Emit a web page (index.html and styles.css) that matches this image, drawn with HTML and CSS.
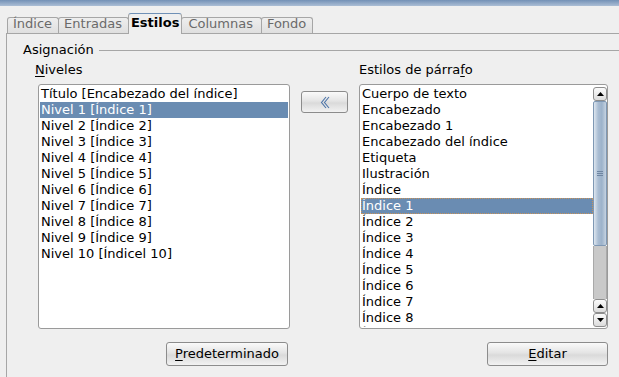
FILE: index.html
```html
<!DOCTYPE html>
<html lang="es">
<head>
  <meta charset="UTF-8" />
  <title>Índice - Estilos</title>
  <link rel="stylesheet" href="styles.css">
</head>
<body>

  <div class="titlebar"></div>

  <!-- Pestañas -->
  <div class="tabs">
    <div class="tab">Índice</div>
    <div class="tab">Entradas</div>
    <div class="tab active">Estilos</div>
    <div class="tab wide">Columnas</div>
    <div class="tab">Fondo</div>
  </div>

  <div class="pane">
    <div class="group-title">
      <span>Asignación</span>
      <div class="group-line"></div>
    </div>

    <div class="group-body">
      <div class="label label-left"><u>N</u>iveles</div>
      <div class="label label-right">Estilos de párra<u>f</u>o</div>

      <!-- Lista de niveles -->
      <div class="listbox levels">
        <div class="item">Título [Encabezado del índice]</div>
        <div class="item selected">Nivel 1 [Índice 1]</div>
        <div class="item">Nivel 2 [Índice 2]</div>
        <div class="item">Nivel 3 [Índice 3]</div>
        <div class="item">Nivel 4 [Índice 4]</div>
        <div class="item">Nivel 5 [Índice 5]</div>
        <div class="item">Nivel 6 [Índice 6]</div>
        <div class="item">Nivel 7 [Índice 7]</div>
        <div class="item">Nivel 8 [Índice 8]</div>
        <div class="item">Nivel 9 [Índice 9]</div>
        <div class="item">Nivel 10 [Índicel 10]</div>
      </div>

      <button class="btn assign-btn">
        <svg width="10" height="13" viewBox="0 0 10 13"><path d="M6 1 L1.5 6.5 L6 12 M9 1 L4.5 6.5 L9 12" stroke="#4c74a8" stroke-width="1.1" fill="none"/></svg>
      </button>

      <!-- Lista de estilos -->
      <div class="listbox styles-list">
        <div class="items">
          <div class="item">Cuerpo de texto</div>
          <div class="item">Encabezado</div>
          <div class="item">Encabezado 1</div>
          <div class="item">Encabezado del índice</div>
          <div class="item">Etiqueta</div>
          <div class="item">Ilustración</div>
          <div class="item">Índice</div>
          <div class="item selected focus">Índice 1</div>
          <div class="item">Índice 2</div>
          <div class="item">Índice 3</div>
          <div class="item">Índice 4</div>
          <div class="item">Índice 5</div>
          <div class="item">Índice 6</div>
          <div class="item">Índice 7</div>
          <div class="item">Índice 8</div>
          <div class="item">Índice 9</div>
        </div>
        <div class="scrollbar">
          <div class="sb-btn"><svg width="7" height="4" viewBox="0 0 7 4"><path d="M0 4 L3.5 0 L7 4 Z" fill="#000"/></svg></div>
          <div class="sb-thumb"><div class="grip"></div></div>
          <div class="sb-trough"></div>
          <div class="sb-btn"><svg width="7" height="4" viewBox="0 0 7 4"><path d="M0 4 L3.5 0 L7 4 Z" fill="#000"/></svg></div>
          <div class="sb-btn"><svg width="7" height="4" viewBox="0 0 7 4"><path d="M0 0 L3.5 4 L7 0 Z" fill="#000"/></svg></div>
        </div>
      </div>

      <button class="btn default-btn"><u>P</u>redeterminado</button>
      <button class="btn edit-btn"><u>E</u>ditar</button>
    </div>
  </div>

</body>
</html>
```

FILE: styles.css
```css
/* Base */
* {
  box-sizing: border-box;
}
html, body {
  margin: 0; padding: 0; height: 100%;
}
body {
  font-family: "DejaVu Sans", sans-serif;
  font-size: 13px;
  line-height: 16px;
  color: #000;
  background: #efefef;
  overflow: hidden;
}
u {
  text-decoration: underline;
  text-underline-offset: 2px;
}

/* Barra superior */
.titlebar {
  height: 6px;
  background: linear-gradient(#7391b6, #abbed5);
}

/* Pestañas */
.tabs {
  display: flex;
  align-items: flex-end;
  margin: 7px 0 0 7px;
  position: relative;
  z-index: 1;
}
.tab {
  border: 1px solid #a6a6a6;
  border-bottom: none;
  border-radius: 3px 3px 0 0;
  padding: 0 6px 3px 5px;
  line-height: 12px;
  color: #6a6a6a;
  background: linear-gradient(#eeeeee, #dfdfdf);
  margin-left: -1px;
}
.tab:first-child {
  margin-left: 0;
}
.tab.wide {
  padding: 0 8px 3px 6px;
}
.tab.active {
  font-weight: bold;
  color: #000;
  background: #efefef;
  border-color: #a6a6a6;
  border-top-color: #6f90b6;
  padding: 3px 2px 5px;
  margin-bottom: -1px;
}

/* Panel */
.pane {
  margin-left: 6px;
  height: calc(100% - 33px);
  border-top: 1px solid #a6a6a6;
  border-left: 1px solid #a6a6a6;
  padding: 8px 0 0 16px;
}

.group-title {
  display: flex;
  align-items: center;
  gap: 5px;
}
.group-line {
  flex: 1;
  height: 1px;
  background: #a6a6a6;
}

.group-body {
  display: grid;
  grid-template-columns: 255px 69px 249px;
  grid-template-rows: 16px auto auto;
  margin: 4px 0 0 12px;
}

.label-left {
  grid-column: 1;
  grid-row: 1;
}
.label-right {
  grid-column: 3;
  grid-row: 1;
}

/* Listas */
.listbox {
  grid-row: 2;
  height: 245px;
  margin-top: 6px;
  background: #fff;
  border: 1px solid #9a9a9a;
  border-radius: 3px;
  padding: 1px;
  overflow: hidden;
}
.levels {
  grid-column: 1;
  margin-left: 3px;
  width: 252px;
}
.styles-list {
  grid-column: 3;
  width: 249px;
  display: flex;
  padding: 1px 0 1px 1px;
}
.items {
  flex: 1;
  overflow: hidden;
}
.item {
  padding-left: 1px;
  white-space: nowrap;
  height: 16px;
}
.item.selected {
  background: #6a8cb2;
  color: #fff;
}
.item.focus {
  outline: 1px dotted #c8935a;
  outline-offset: -1px;
}

/* Barra de desplazamiento */
.scrollbar {
  width: 14px;
  margin-top: 1px;
  display: flex;
  flex-direction: column;
}
.sb-btn {
  height: 14px;
  border: 1px solid #8e8e8e;
  border-radius: 3px;
  background: linear-gradient(#fbfbfb, #dcdcdc);
  display: flex;
  align-items: center;
  justify-content: center;
}
.sb-thumb {
  height: 145px;
  border: 1px solid #7f98b4;
  border-radius: 2px;
  background: linear-gradient(to right, #dde6ef, #aabdd3 35%, #9cb2ca 65%, #c6d3e1);
  display: flex;
  align-items: center;
  justify-content: center;
}
.grip {
  width: 6px;
  height: 5px;
  border-top: 1px solid #6f86a2;
  border-bottom: 1px solid #6f86a2;
  background: linear-gradient(transparent 1px, #6f86a2 1px, #6f86a2 2px, transparent 2px);
}
.sb-trough {
  flex: 1;
  background: #c9c9c9;
  border-left: 1px solid #a9a9a9;
  border-right: 1px solid #a9a9a9;
}

/* Botones */
.btn {
  font: inherit;
  color: #000;
  border: 1px solid #8c8c8c;
  border-radius: 3px;
  background: linear-gradient(#fafafa, #e4e4e4 45%, #dadada 55%, #f2f2f2);
  padding: 0;
  height: 24px;
  cursor: pointer;
}
.assign-btn {
  grid-column: 2;
  grid-row: 2;
  align-self: start;
  width: 47px;
  height: 22px;
  margin: 13px 0 0 11px;
  display: flex;
  align-items: center;
  justify-content: center;
}
.default-btn {
  grid-column: 1;
  grid-row: 3;
  justify-self: end;
  width: 122px;
  margin: 13px 2px 0 0;
}
.edit-btn {
  grid-column: 3;
  grid-row: 3;
  justify-self: end;
  width: 121px;
  margin-top: 13px;
}
```
